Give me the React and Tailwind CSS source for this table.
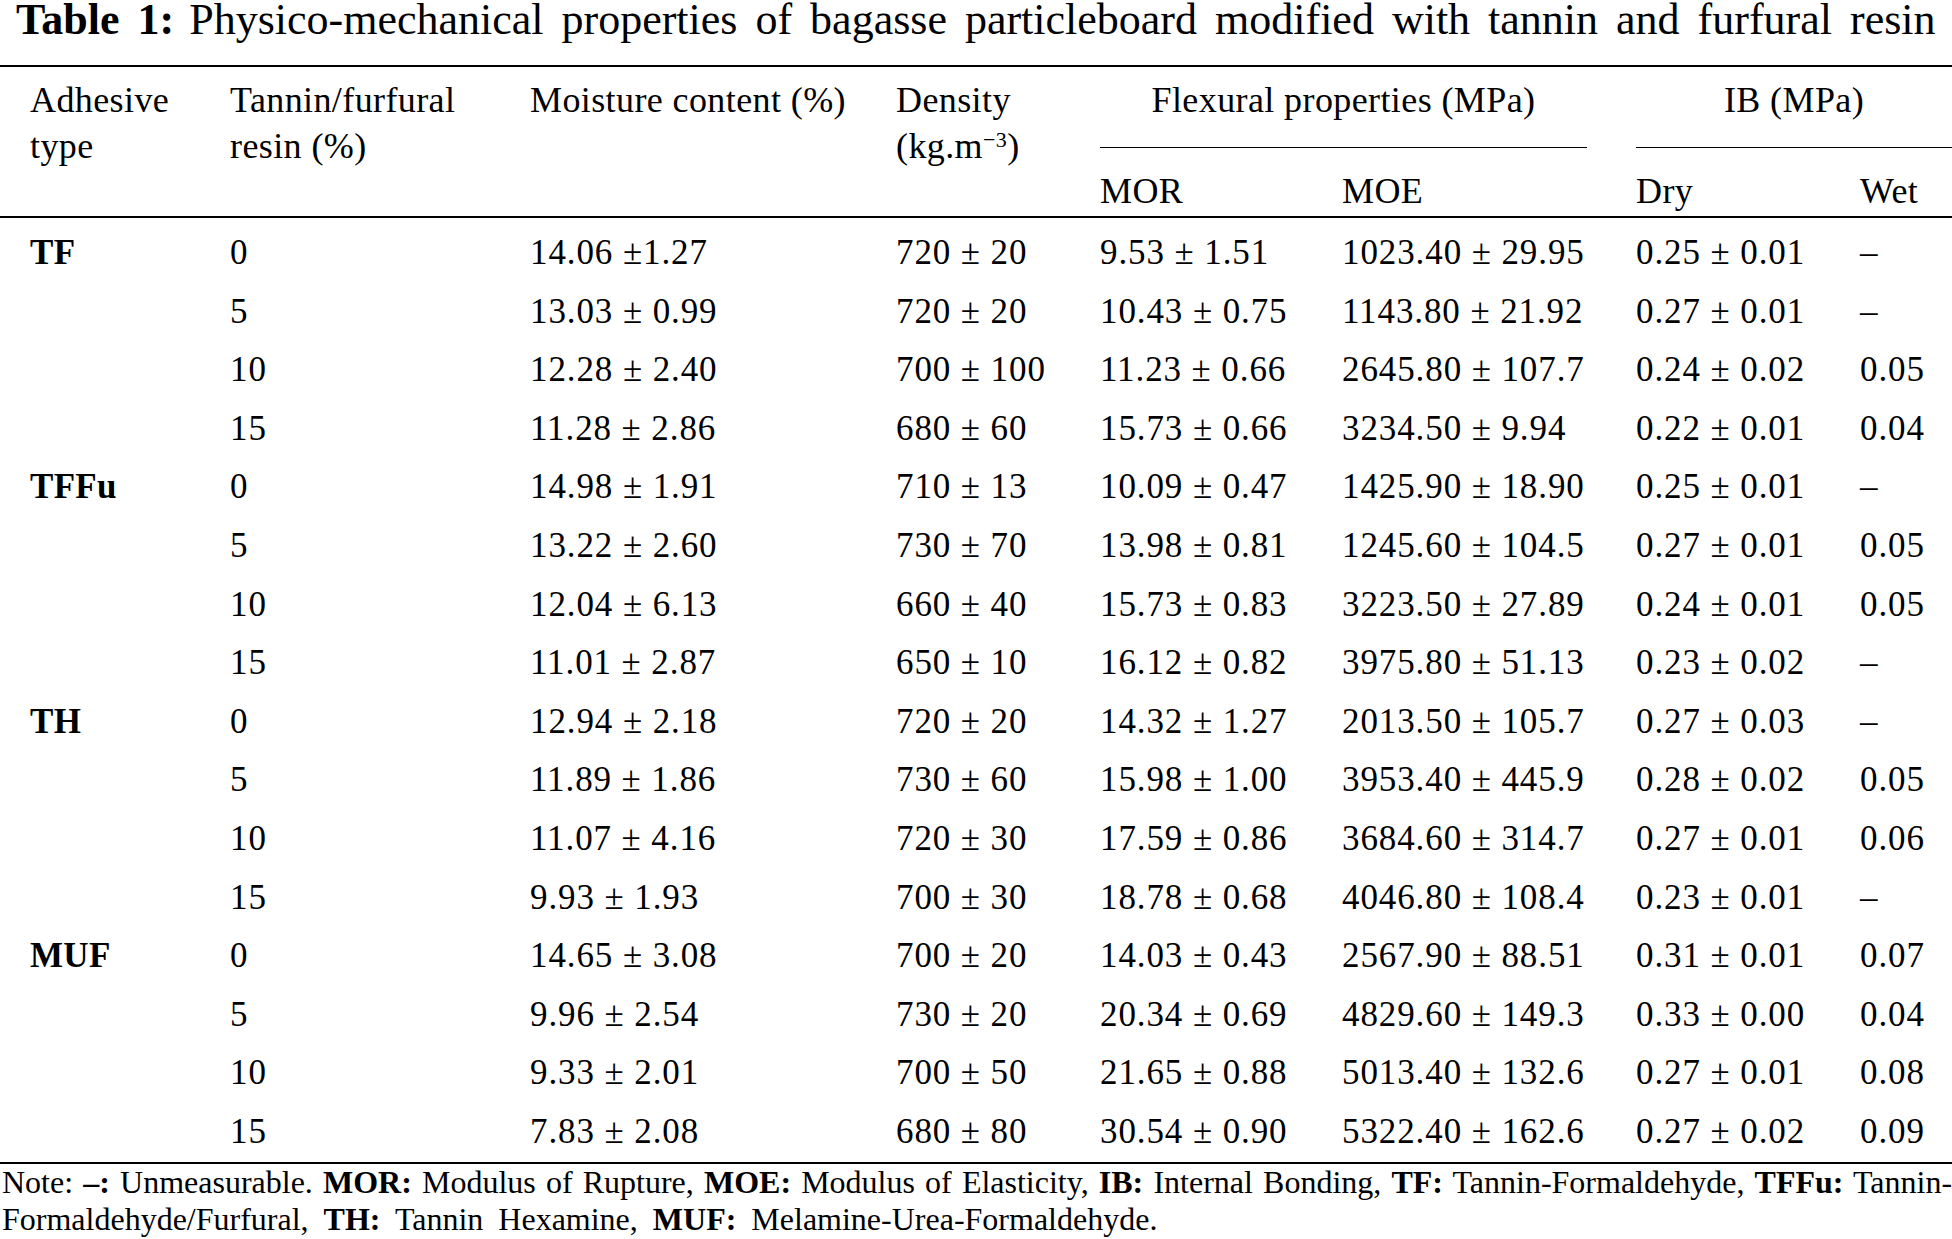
const rows = [
  ['TF', '0', '14.06 ±1.27', '720 ± 20', '9.53 ± 1.51', '1023.40 ± 29.95', '0.25 ± 0.01', '–'],
  ['', '5', '13.03 ± 0.99', '720 ± 20', '10.43 ± 0.75', '1143.80 ± 21.92', '0.27 ± 0.01', '–'],
  ['', '10', '12.28 ± 2.40', '700 ± 100', '11.23 ± 0.66', '2645.80 ± 107.7', '0.24 ± 0.02', '0.05'],
  ['', '15', '11.28 ± 2.86', '680 ± 60', '15.73 ± 0.66', '3234.50 ± 9.94', '0.22 ± 0.01', '0.04'],
  ['TFFu', '0', '14.98 ± 1.91', '710 ± 13', '10.09 ± 0.47', '1425.90 ± 18.90', '0.25 ± 0.01', '–'],
  ['', '5', '13.22 ± 2.60', '730 ± 70', '13.98 ± 0.81', '1245.60 ± 104.5', '0.27 ± 0.01', '0.05'],
  ['', '10', '12.04 ± 6.13', '660 ± 40', '15.73 ± 0.83', '3223.50 ± 27.89', '0.24 ± 0.01', '0.05'],
  ['', '15', '11.01 ± 2.87', '650 ± 10', '16.12 ± 0.82', '3975.80 ± 51.13', '0.23 ± 0.02', '–'],
  ['TH', '0', '12.94 ± 2.18', '720 ± 20', '14.32 ± 1.27', '2013.50 ± 105.7', '0.27 ± 0.03', '–'],
  ['', '5', '11.89 ± 1.86', '730 ± 60', '15.98 ± 1.00', '3953.40 ± 445.9', '0.28 ± 0.02', '0.05'],
  ['', '10', '11.07 ± 4.16', '720 ± 30', '17.59 ± 0.86', '3684.60 ± 314.7', '0.27 ± 0.01', '0.06'],
  ['', '15', '9.93 ± 1.93', '700 ± 30', '18.78 ± 0.68', '4046.80 ± 108.4', '0.23 ± 0.01', '–'],
  ['MUF', '0', '14.65 ± 3.08', '700 ± 20', '14.03 ± 0.43', '2567.90 ± 88.51', '0.31 ± 0.01', '0.07'],
  ['', '5', '9.96 ± 2.54', '730 ± 20', '20.34 ± 0.69', '4829.60 ± 149.3', '0.33 ± 0.00', '0.04'],
  ['', '10', '9.33 ± 2.01', '700 ± 50', '21.65 ± 0.88', '5013.40 ± 132.6', '0.27 ± 0.01', '0.08'],
  ['', '15', '7.83 ± 2.08', '680 ± 80', '30.54 ± 0.90', '5322.40 ± 162.6', '0.27 ± 0.02', '0.09'],
];

export default function App() {
  return (
    <div className="w-[1952px] h-[1239px] bg-white text-black font-['Liberation_Serif','Times_New_Roman',serif] overflow-hidden">
      <div className="h-[65px] pt-[2px] pl-[16px] text-[44px] leading-[36px] whitespace-nowrap [word-spacing:7px]">
        <span className="font-bold">Table 1:</span>
        <span className="ml-[15px]">Physico-mechanical properties of bagasse particleboard modified with tannin and furfural resin</span>
      </div>

      <div className="border-t-2 border-black">
        <div className="grid grid-cols-[200px_300px_366px_204px_242px_294px_224px_1fr] grid-rows-[71px_20px_46px] ml-[30px] h-[149px] pt-[10px] text-[36px] leading-[46px] tracking-[0.4px]">
          <div className="row-span-2 col-start-1 row-start-1">Adhesive<br />type</div>
          <div className="row-span-2 col-start-2 row-start-1">Tannin/furfural<br />resin (%)</div>
          <div className="row-span-2 col-start-3 row-start-1">Moisture content (%)</div>
          <div className="row-span-2 col-start-4 row-start-1">
            Density<br />(kg.m<sup className="text-[22px]">−3</sup>)
          </div>
          <div className="col-span-2 col-start-5 row-start-1 mr-[49px] border-b border-black text-center">
            Flexural properties (MPa)
          </div>
          <div className="col-span-2 col-start-7 row-start-1 border-b border-black text-center">IB (MPa)</div>
          <div className="col-start-5 row-start-3">MOR</div>
          <div className="col-start-6 row-start-3">MOE</div>
          <div className="col-start-7 row-start-3">Dry</div>
          <div className="col-start-8 row-start-3">Wet</div>
        </div>

        <div className="border-t-2 border-black pt-[6px]">
          {rows.map((r, i) => (
            <div
              key={i}
              className="grid grid-cols-[200px_300px_366px_204px_242px_294px_224px_1fr] ml-[30px] h-[58.6px] leading-[58.6px] text-[35px] tracking-[0.9px] whitespace-nowrap"
            >
              <div className="font-bold tracking-[0.3px]">{r[0]}</div>
              <div>{r[1]}</div>
              <div>{r[2]}</div>
              <div>{r[3]}</div>
              <div>{r[4]}</div>
              <div>{r[5]}</div>
              <div>{r[6]}</div>
              <div>{r[7]}</div>
            </div>
          ))}
        </div>

        <div className="border-t-2 border-black pl-[2px] text-[32px] leading-[37px]">
          <div className="whitespace-nowrap text-justify [text-align-last:justify]">
            Note: <b>–:</b> Unmeasurable. <b>MOR:</b> Modulus of Rupture, <b>MOE:</b> Modulus of Elasticity, <b>IB:</b> Internal Bonding, <b>TF:</b> Tannin-Formaldehyde, <b>TFFu:</b> Tannin-
          </div>
          <div className="whitespace-nowrap [word-spacing:7px]">
            Formaldehyde/Furfural, <b>TH:</b> Tannin Hexamine, <b>MUF:</b> Melamine-Urea-Formaldehyde.
          </div>
        </div>
      </div>
    </div>
  );
}
